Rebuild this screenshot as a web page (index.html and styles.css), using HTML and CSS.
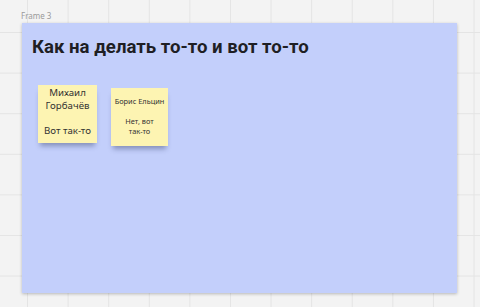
FILE: index.html
```html
<!DOCTYPE html>
<html>
<head>
    <title>Frame 3</title>
    <meta name="viewport" content="width=device-width, initial-scale=1">
    <link rel="stylesheet" href="styles.css">
</head>
<body>
    <div class="canvas">
        <div class="frame-label">Frame 3</div>
        <div class="frame">
            <h1>Как на делать то-то и вот то-то</h1>

            <div class="notes">
                <div class="note note-big">
                    Михаил<br>Горбачёв<br><br>Вот так-то
                </div>
                <div class="note note-small">
                    Борис Ельцин<br><br>Нет, вот<br>так-то
                </div>
            </div>
        </div>
    </div>
</body>
</html>
```

FILE: styles.css
```css
body {
    margin: 0;
    font-family: "Noto Sans", "Open Sans", sans-serif;
    background-color: #f3f3f3;
    background-image:
        linear-gradient(to right, #e4e4e4 1px, transparent 1px),
        linear-gradient(to bottom, #e4e4e4 1px, transparent 1px);
    background-size: 40.6px 40.6px;
    background-position: 27px -8.6px;
    height: 307px;
    overflow: hidden;
}

.canvas {
    padding: 10px 0 0 21px;
}

.frame-label {
    font-size: 8px;
    line-height: 11px;
    color: #9a9a9a;
    margin-bottom: 2px;
}

.frame {
    margin-left: 1px;
    width: 435px;
    height: 270px;
    background-color: #c3cffb;
    box-shadow: 0 1px 3px rgba(0,0,0,0.25);
    box-sizing: border-box;
    padding: 13px 0 0 10px;
}

h1 {
    margin: 0;
    font-family: Roboto, "Noto Sans", sans-serif;
    font-size: 18.6px;
    line-height: 23px;
    font-weight: 700;
    color: #1f1f24;
}

.notes {
    display: flex;
    align-items: flex-start;
    gap: 14px;
    margin-top: 26px;
    padding-left: 6px;
}

.note {
    background-color: #fdf4b2;
    text-align: center;
    color: #333;
    box-shadow: 0 5px 5px -2px rgba(40,50,90,0.4);
}

.note-big {
    width: 59px;
    height: 58px;
    box-sizing: border-box;
    padding-top: 2px;
    font-size: 9.7px;
    line-height: 12.5px;
}

.note-small {
    width: 57px;
    height: 58px;
    margin-top: 3px;
    box-sizing: border-box;
    padding-top: 8px;
    font-size: 7.4px;
    line-height: 10px;
}
```
